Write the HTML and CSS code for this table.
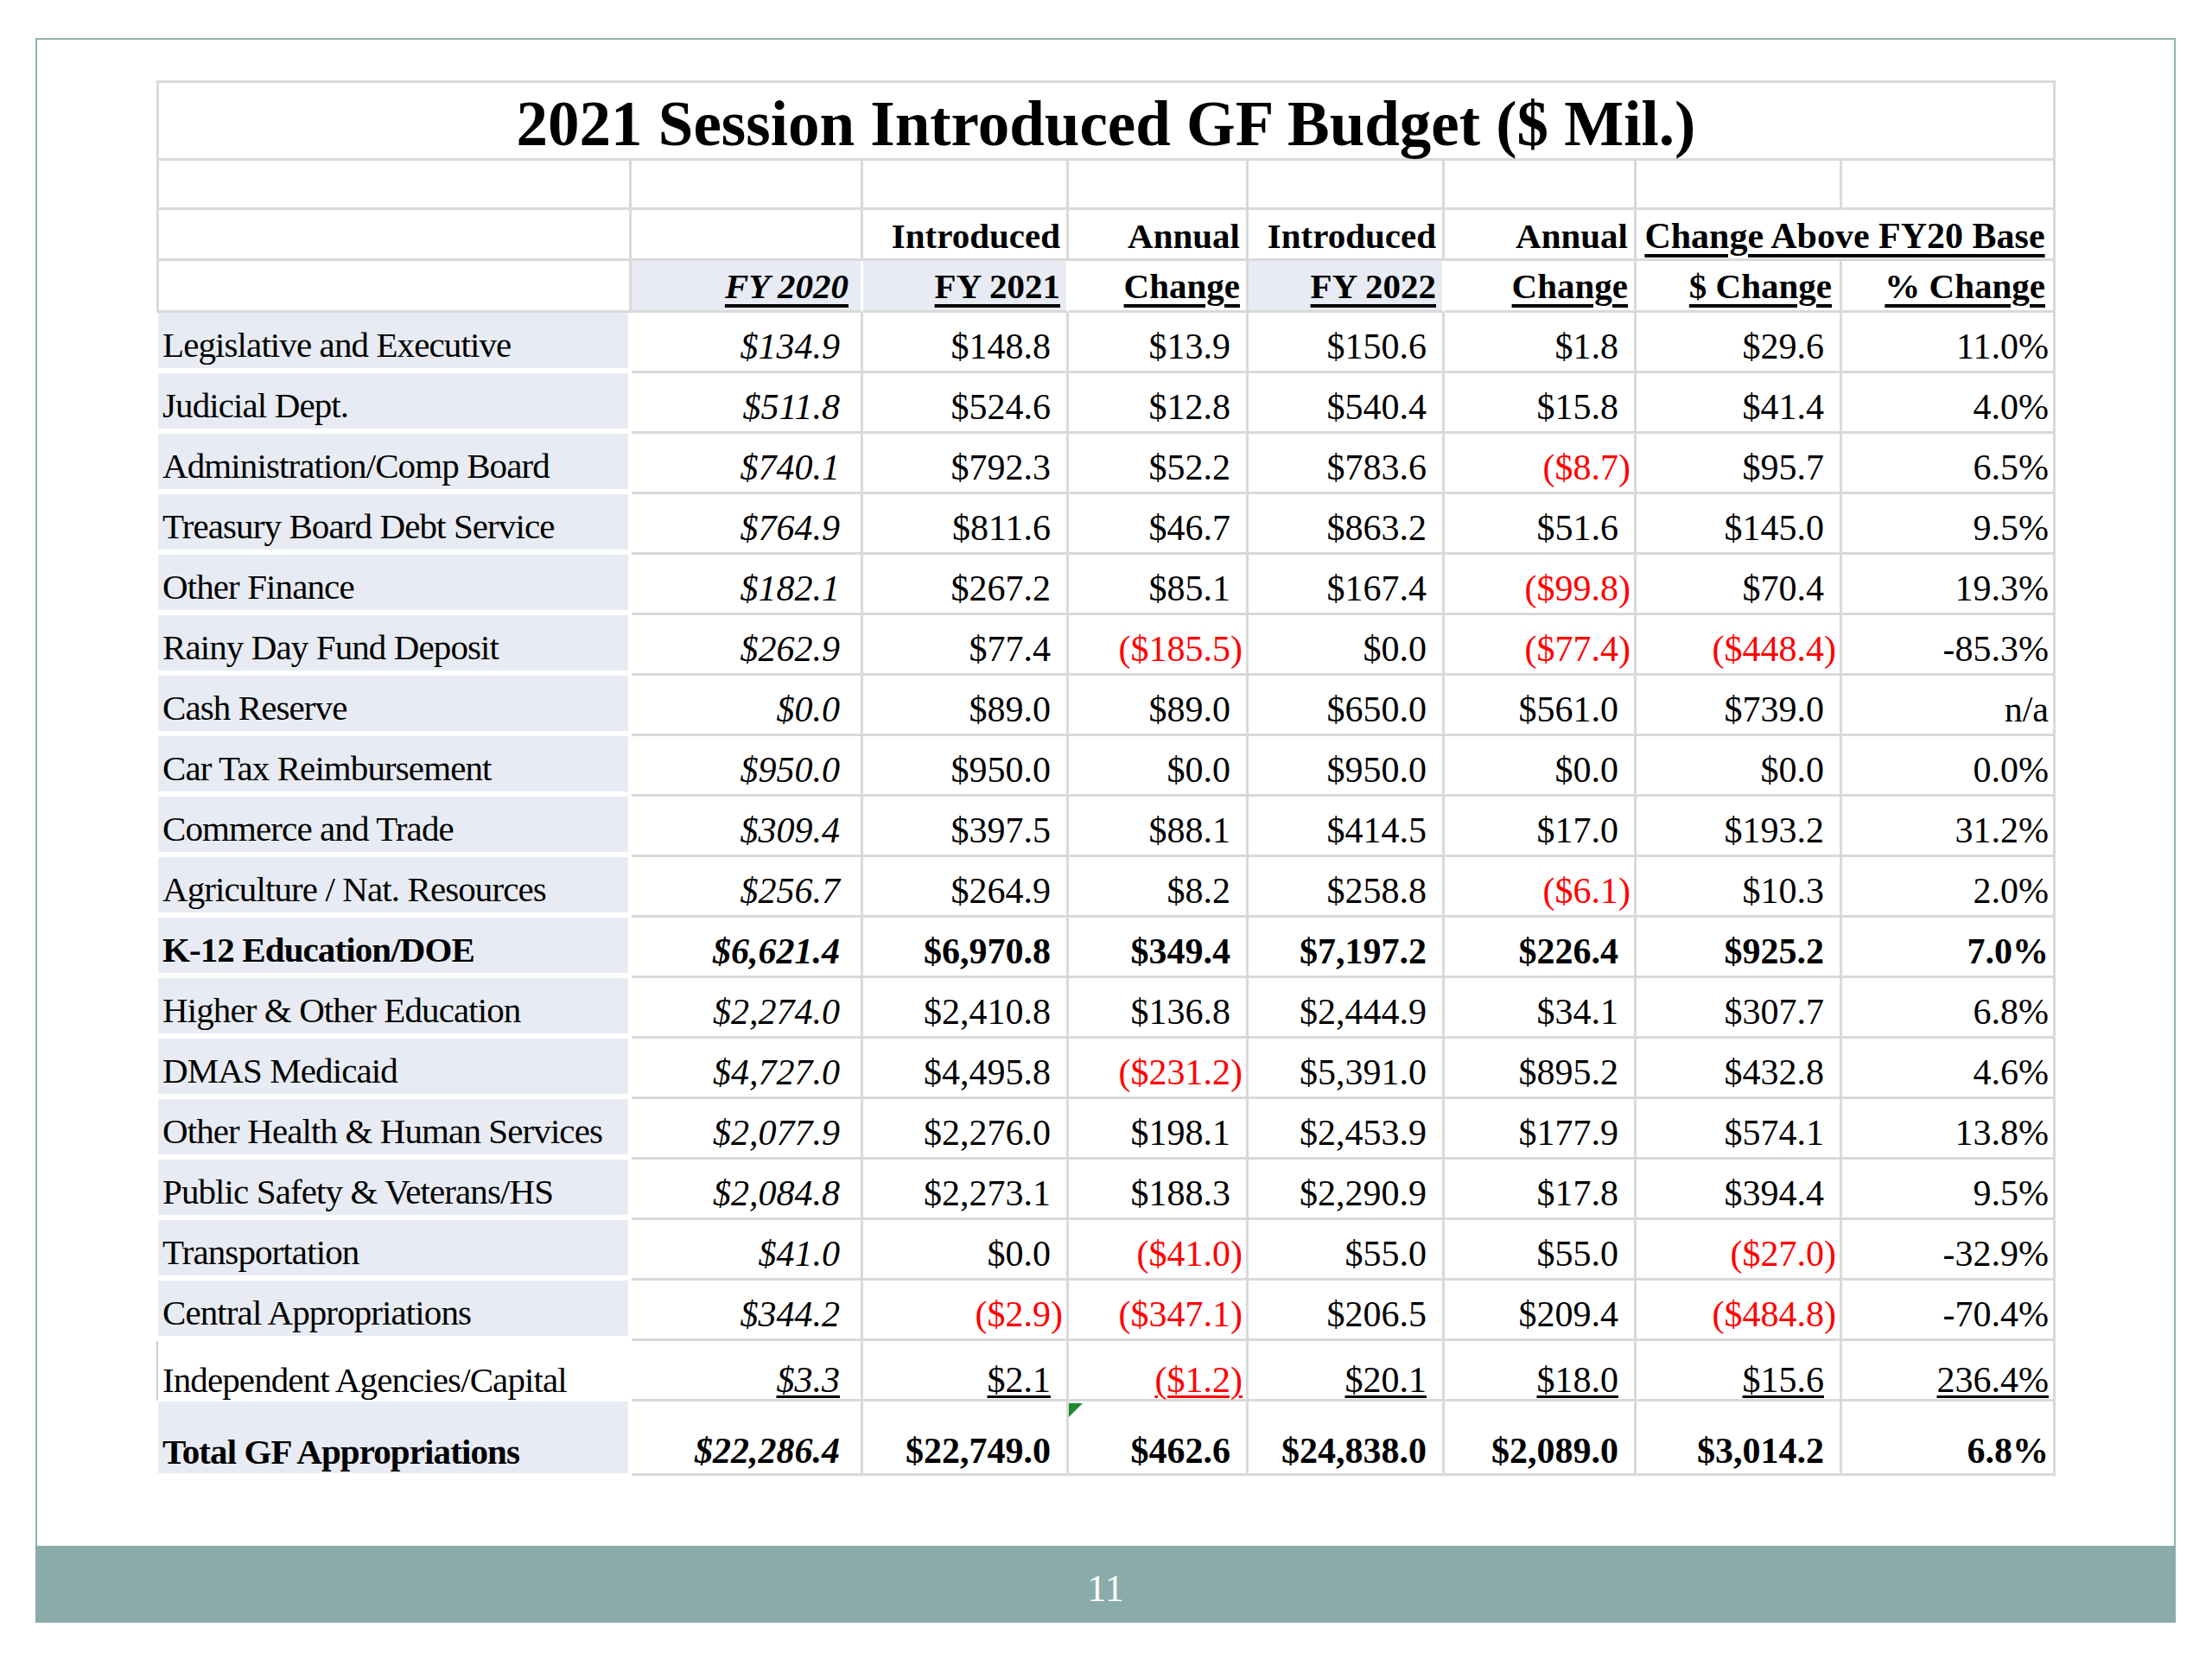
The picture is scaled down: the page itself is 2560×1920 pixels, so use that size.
FILE: index.html
```html
<!DOCTYPE html>
<html lang="en">
<head>
<meta charset="utf-8">
<title>2021 Session Introduced GF Budget</title>
<link rel="stylesheet" href="styles.css">
</head>
<body>
<div class="slide">
  <div class="content">
    <div class="budget">
      <div class="row r-title">
        <div class="c t">2021 Session Introduced GF Budget ($ Mil.)</div>
      </div>
      <div class="row r-empty">
        <div class="c first"></div><div class="c"></div><div class="c"></div><div class="c"></div>
        <div class="c"></div><div class="c"></div><div class="c"></div><div class="c"></div>
      </div>
      <div class="row r-h1">
        <div class="c first"></div>
        <div class="c"></div>
        <div class="c">Introduced</div>
        <div class="c">Annual</div>
        <div class="c">Introduced</div>
        <div class="c">Annual</div>
        <div class="c span2"><span class="u">Change Above FY20 Base</span></div>
      </div>
      <div class="row r-h2">
        <div class="c first"></div>
        <div class="c sh fy20h"><span class="u">FY 2020</span></div>
        <div class="c sh"><span class="u">FY 2021</span></div>
        <div class="c"><span class="u">Change</span></div>
        <div class="c sh"><span class="u">FY 2022</span></div>
        <div class="c"><span class="u">Change</span></div>
        <div class="c wide"><span class="u">$ Change</span></div>
        <div class="c wide"><span class="u">% Change</span></div>
      </div>

      <div class="row r-data">
        <div class="c lbl">Legislative and Executive</div>
        <div class="c n it">$134.9</div><div class="c n">$148.8</div><div class="c n">$13.9</div><div class="c n">$150.6</div><div class="c n">$1.8</div><div class="c n">$29.6</div><div class="c pct">11.0%</div>
      </div>
      <div class="row r-data">
        <div class="c lbl">Judicial Dept.</div>
        <div class="c n it">$511.8</div><div class="c n">$524.6</div><div class="c n">$12.8</div><div class="c n">$540.4</div><div class="c n">$15.8</div><div class="c n">$41.4</div><div class="c pct">4.0%</div>
      </div>
      <div class="row r-data">
        <div class="c lbl">Administration/Comp Board</div>
        <div class="c n it">$740.1</div><div class="c n">$792.3</div><div class="c n">$52.2</div><div class="c n">$783.6</div><div class="c neg">($8.7)</div><div class="c n">$95.7</div><div class="c pct">6.5%</div>
      </div>
      <div class="row r-data">
        <div class="c lbl">Treasury Board Debt Service</div>
        <div class="c n it">$764.9</div><div class="c n">$811.6</div><div class="c n">$46.7</div><div class="c n">$863.2</div><div class="c n">$51.6</div><div class="c n">$145.0</div><div class="c pct">9.5%</div>
      </div>
      <div class="row r-data">
        <div class="c lbl">Other Finance</div>
        <div class="c n it">$182.1</div><div class="c n">$267.2</div><div class="c n">$85.1</div><div class="c n">$167.4</div><div class="c neg">($99.8)</div><div class="c n">$70.4</div><div class="c pct">19.3%</div>
      </div>
      <div class="row r-data">
        <div class="c lbl">Rainy Day Fund Deposit</div>
        <div class="c n it">$262.9</div><div class="c n">$77.4</div><div class="c neg">($185.5)</div><div class="c n">$0.0</div><div class="c neg">($77.4)</div><div class="c neg">($448.4)</div><div class="c pct">-85.3%</div>
      </div>
      <div class="row r-data">
        <div class="c lbl">Cash Reserve</div>
        <div class="c n it">$0.0</div><div class="c n">$89.0</div><div class="c n">$89.0</div><div class="c n">$650.0</div><div class="c n">$561.0</div><div class="c n">$739.0</div><div class="c pct">n/a</div>
      </div>
      <div class="row r-data">
        <div class="c lbl">Car Tax Reimbursement</div>
        <div class="c n it">$950.0</div><div class="c n">$950.0</div><div class="c n">$0.0</div><div class="c n">$950.0</div><div class="c n">$0.0</div><div class="c n">$0.0</div><div class="c pct">0.0%</div>
      </div>
      <div class="row r-data">
        <div class="c lbl">Commerce and Trade</div>
        <div class="c n it">$309.4</div><div class="c n">$397.5</div><div class="c n">$88.1</div><div class="c n">$414.5</div><div class="c n">$17.0</div><div class="c n">$193.2</div><div class="c pct">31.2%</div>
      </div>
      <div class="row r-data">
        <div class="c lbl">Agriculture / Nat. Resources</div>
        <div class="c n it">$256.7</div><div class="c n">$264.9</div><div class="c n">$8.2</div><div class="c n">$258.8</div><div class="c neg">($6.1)</div><div class="c n">$10.3</div><div class="c pct">2.0%</div>
      </div>
      <div class="row r-data r-bold">
        <div class="c lbl">K-12 Education/DOE</div>
        <div class="c n it">$6,621.4</div><div class="c n">$6,970.8</div><div class="c n">$349.4</div><div class="c n">$7,197.2</div><div class="c n">$226.4</div><div class="c n">$925.2</div><div class="c pct">7.0%</div>
      </div>
      <div class="row r-data">
        <div class="c lbl">Higher &amp; Other Education</div>
        <div class="c n it">$2,274.0</div><div class="c n">$2,410.8</div><div class="c n">$136.8</div><div class="c n">$2,444.9</div><div class="c n">$34.1</div><div class="c n">$307.7</div><div class="c pct">6.8%</div>
      </div>
      <div class="row r-data">
        <div class="c lbl">DMAS Medicaid</div>
        <div class="c n it">$4,727.0</div><div class="c n">$4,495.8</div><div class="c neg">($231.2)</div><div class="c n">$5,391.0</div><div class="c n">$895.2</div><div class="c n">$432.8</div><div class="c pct">4.6%</div>
      </div>
      <div class="row r-data">
        <div class="c lbl">Other Health &amp; Human Services</div>
        <div class="c n it">$2,077.9</div><div class="c n">$2,276.0</div><div class="c n">$198.1</div><div class="c n">$2,453.9</div><div class="c n">$177.9</div><div class="c n">$574.1</div><div class="c pct">13.8%</div>
      </div>
      <div class="row r-data">
        <div class="c lbl">Public Safety &amp; Veterans/HS</div>
        <div class="c n it">$2,084.8</div><div class="c n">$2,273.1</div><div class="c n">$188.3</div><div class="c n">$2,290.9</div><div class="c n">$17.8</div><div class="c n">$394.4</div><div class="c pct">9.5%</div>
      </div>
      <div class="row r-data">
        <div class="c lbl">Transportation</div>
        <div class="c n it">$41.0</div><div class="c n">$0.0</div><div class="c neg">($41.0)</div><div class="c n">$55.0</div><div class="c n">$55.0</div><div class="c neg">($27.0)</div><div class="c pct">-32.9%</div>
      </div>
      <div class="row r-data">
        <div class="c lbl">Central Appropriations</div>
        <div class="c n it">$344.2</div><div class="c neg">($2.9)</div><div class="c neg">($347.1)</div><div class="c n">$206.5</div><div class="c n">$209.4</div><div class="c neg">($484.8)</div><div class="c pct">-70.4%</div>
      </div>
      <div class="row r-data r-ind">
        <div class="c lbl">Independent Agencies/Capital</div>
        <div class="c n it"><span class="ui">$3.3</span></div><div class="c n"><span class="ui">$2.1</span></div><div class="c neg"><span class="ui">($1.2)</span></div><div class="c n"><span class="ui">$20.1</span></div><div class="c n"><span class="ui">$18.0</span></div><div class="c n"><span class="ui">$15.6</span></div><div class="c pct"><span class="ui">236.4%</span></div>
      </div>
      <div class="row r-total">
        <div class="c lbl">Total GF Appropriations</div>
        <div class="c n it">$22,286.4</div><div class="c n">$22,749.0</div><div class="c n flag"><span class="tri"></span>$462.6</div><div class="c n">$24,838.0</div><div class="c n">$2,089.0</div><div class="c n">$3,014.2</div><div class="c pct">6.8%</div>
      </div>
    </div>
  </div>
  <div class="footer">11</div>
</div>
</body>
</html>
```

FILE: styles.css
```css
* {
  box-sizing: border-box;
}

html,
body {
  margin: 0;
  background: #ffffff;
}

body {
  font-family: "Liberation Serif", "Times New Roman", serif;
  color: #000000;
}

.slide {
  margin: 44px 0 0 41px;
  width: 2477px;
  height: 1834px;
  border: 2px solid #93b2af;
  border-bottom: 0;
  display: flex;
  flex-direction: column;
}

.content {
  flex: 1;
  padding: 47px 0 0 138px;
}

.footer {
  height: 89px;
  margin: 0 -2px;
  background: #8aabaa;
  color: #ffffff;
  font-size: 44px;
  line-height: 79px;
  padding-top: 10px;
  text-align: center;
}

/* budget grid */
.budget {
  display: grid;
  width: 2198px;
  grid-template-columns: 550px 268px 238px 208px 227px 222px 238px 247px;
  grid-template-rows: 93px 57px 59px 60px repeat(18, 70px) 86px;
}

.row {
  display: contents;
}

.c {
  position: relative;
  display: flex;
  align-items: flex-end;
  justify-content: flex-end;
  border-right: 3px solid #d9d9d9;
  border-bottom: 3px solid #d9d9d9;
  font-size: 42px;
  line-height: 1;
  white-space: nowrap;
}

.first {
  border-left: 3px solid #d9d9d9;
}

/* title */
.t {
  grid-column: 1 / -1;
  border: 3px solid #d9d9d9;
  justify-content: center;
  font-size: 73px;
  font-weight: bold;
  padding-bottom: 3px;
}

/* headings */
.r-h1 .c,
.r-h2 .c {
  font-size: 41px;
  font-weight: bold;
  padding-right: 7px;
}

.r-h1 .c {
  padding-bottom: 5px;
}

.r-h2 .c {
  padding-bottom: 7px;
}

.r-h1 .span2 {
  grid-column: span 2;
  justify-content: center;
  padding-right: 0;
  font-size: 42px;
}

.r-h2 .wide {
  padding-right: 9px;
}

.r-h2 .fy20h {
  font-style: italic;
  padding-right: 14px;
}

.sh {
  background: #e8ebf3;
  border-right-color: #ffffff;
}

.u {
  text-decoration: underline;
  text-decoration-thickness: 4px;
  text-underline-offset: 7px;
}

/* data rows */
.r-data .c {
  padding-bottom: 7px;
}

.r-data .lbl {
  padding-bottom: 6px;
}

.lbl {
  justify-content: flex-start;
  background: #e8ebf3;
  border-left: 2px solid #ffffff;
  border-right: 4px solid #ffffff;
  border-bottom: 6px solid #ffffff;
  padding-left: 5px;
  font-size: 41px;
  letter-spacing: -0.9px;
}

.n {
  padding-right: 18px;
}

.it {
  font-style: italic;
  padding-right: 24px;
}

.neg {
  color: #ff0000;
  padding-right: 4px;
}

.pct {
  padding-right: 5px;
}

.r-bold .c {
  font-weight: bold;
}

/* independent agencies row */
.r-data.r-ind .c {
  padding-bottom: 1px;
}

.r-ind .lbl {
  background: #ffffff;
  border-left: 2px solid #cfcfcf;
  border-bottom: 3px solid #ffffff;
}

.ui {
  text-decoration: underline;
  text-decoration-thickness: 3px;
  text-underline-offset: 4px;
}

/* total row */
.r-total .c {
  font-weight: bold;
  padding-bottom: 5px;
}

.r-total .lbl {
  border-bottom: 3px solid #ffffff;
  padding-bottom: 4px;
}

.tri {
  position: absolute;
  top: 2px;
  left: 0;
  width: 0;
  height: 0;
  border-top: 16px solid #1e8c2e;
  border-right: 16px solid transparent;
}
```
